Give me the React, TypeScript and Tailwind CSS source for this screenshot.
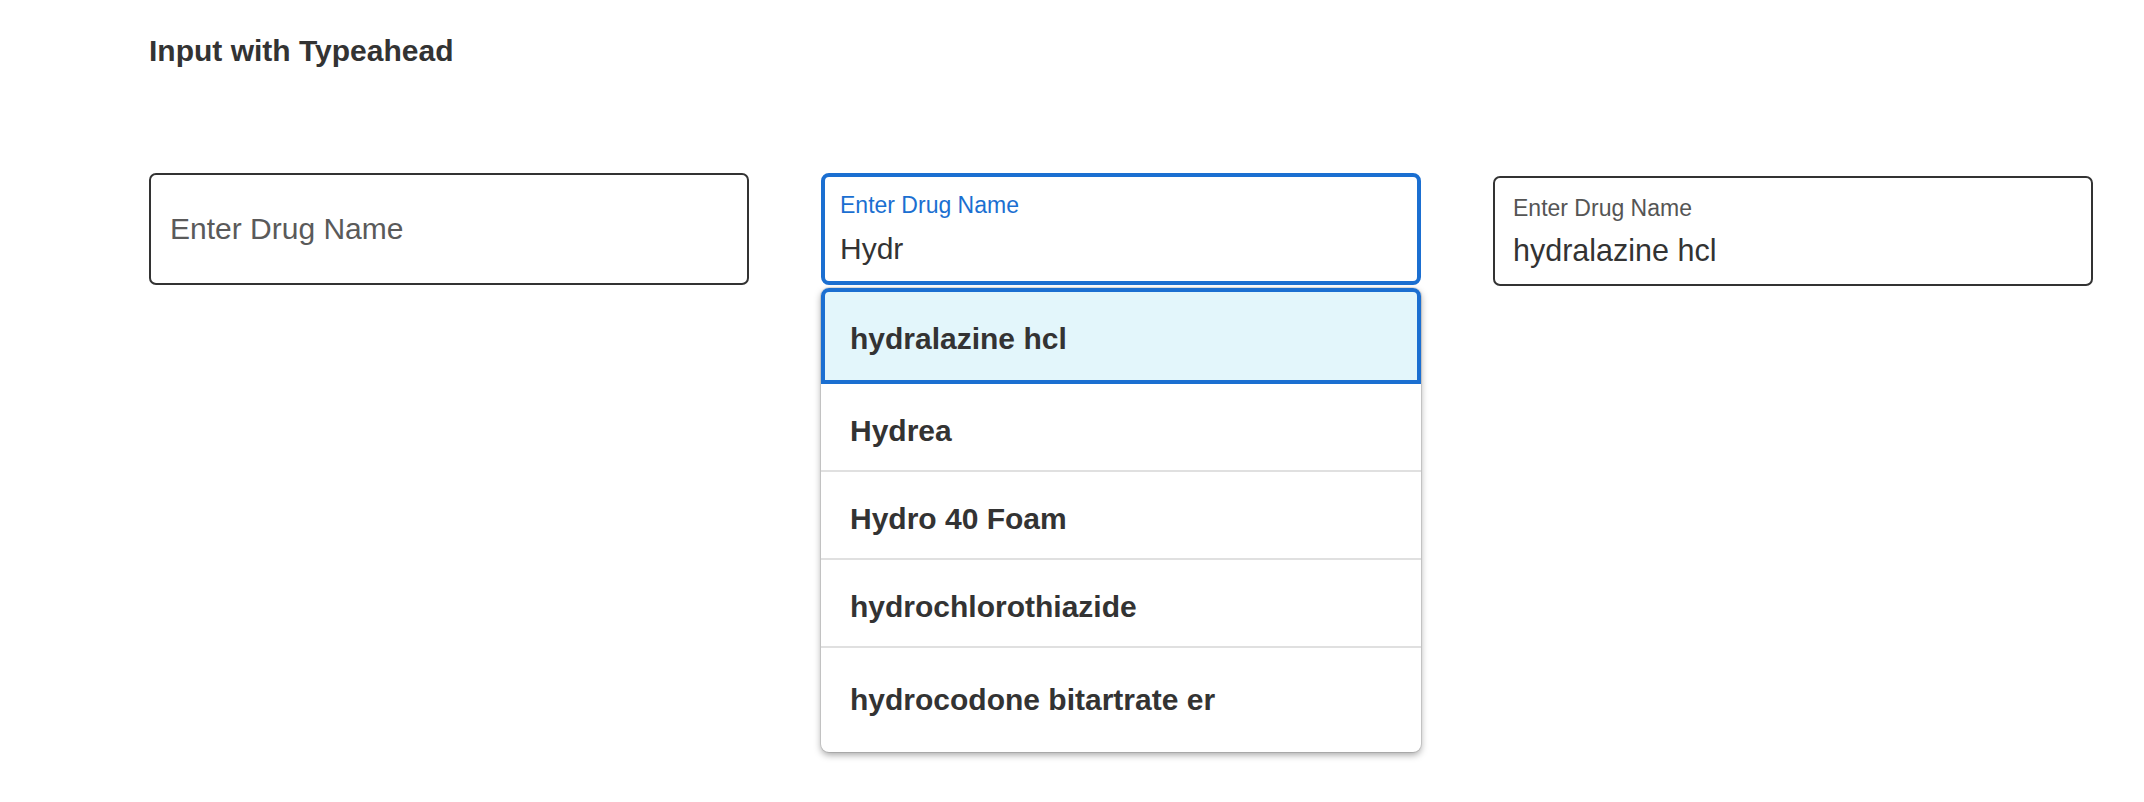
const SUGGESTIONS = [
  'hydralazine hcl',
  'Hydrea',
  'Hydro 40 Foam',
  'hydrochlorothiazide',
  'hydrocodone bitartrate er',
]

export default function App() {
  return (
    <div className="min-h-[802px] w-[2144px] bg-white pl-[149px] pt-[33px] font-['Liberation_Sans',Arial,sans-serif] text-[#333]">
      <h2 className="text-[30px] font-bold leading-[36px]">Input with Typeahead</h2>

      <div className="mt-[104px] grid w-[1944px] grid-cols-[600px_600px_600px] gap-x-[72px]">
        {/* empty */}
        <div className="flex h-[112px] items-center rounded-[7px] border-2 border-[#333] pl-[19px]">
          <span className="text-[30px] leading-[34px] text-[#5a5a5a]">Enter Drug Name</span>
        </div>

        {/* focused, with suggestions */}
        <div className="relative">
          <div className="flex h-[112px] flex-col rounded-[8px] border-4 border-[#1b6fd1] pl-[15px] pt-[15px]">
            <span className="text-[23px] leading-[26px] text-[#1b6fd1]">Enter Drug Name</span>
            <span className="mt-[14px] text-[30px] leading-[34px] text-[#333]">Hydr</span>
          </div>

          <ul className="absolute left-0 top-[115px] z-10 w-[600px] rounded-[8px] bg-white shadow-[0_0_0_1px_rgba(0,0,0,0.1),0_3px_7px_rgba(0,0,0,0.35)]">
            {SUGGESTIONS.map((name, i) => {
              const active = i === 0
              const last = i === SUGGESTIONS.length - 1
              return (
                <li
                  key={name}
                  className={
                    active
                      ? 'flex h-[96px] items-center rounded-t-[8px] border-4 border-[#1b6fd1] bg-[#e3f6fb] pl-[25px] pt-[6px]'
                      : last
                        ? 'flex h-[104px] items-center rounded-b-[8px] pl-[29px]'
                        : 'flex h-[88px] items-center border-b-2 border-[#e0e0e0] pl-[29px] pt-[7px]'
                  }
                >
                  <span className="text-[30px] font-bold leading-[34px] text-[#333]">{name}</span>
                </li>
              )
            })}
          </ul>
        </div>

        {/* filled */}
        <div className="mt-[3px] flex h-[110px] flex-col rounded-[7px] border-2 border-[#333] pl-[18px] pt-[17px]">
          <span className="text-[23px] leading-[26px] text-[#555]">Enter Drug Name</span>
          <span className="mt-[12px] text-[30.5px] leading-[34px] text-[#333]">hydralazine hcl</span>
        </div>
      </div>
    </div>
  )
}
